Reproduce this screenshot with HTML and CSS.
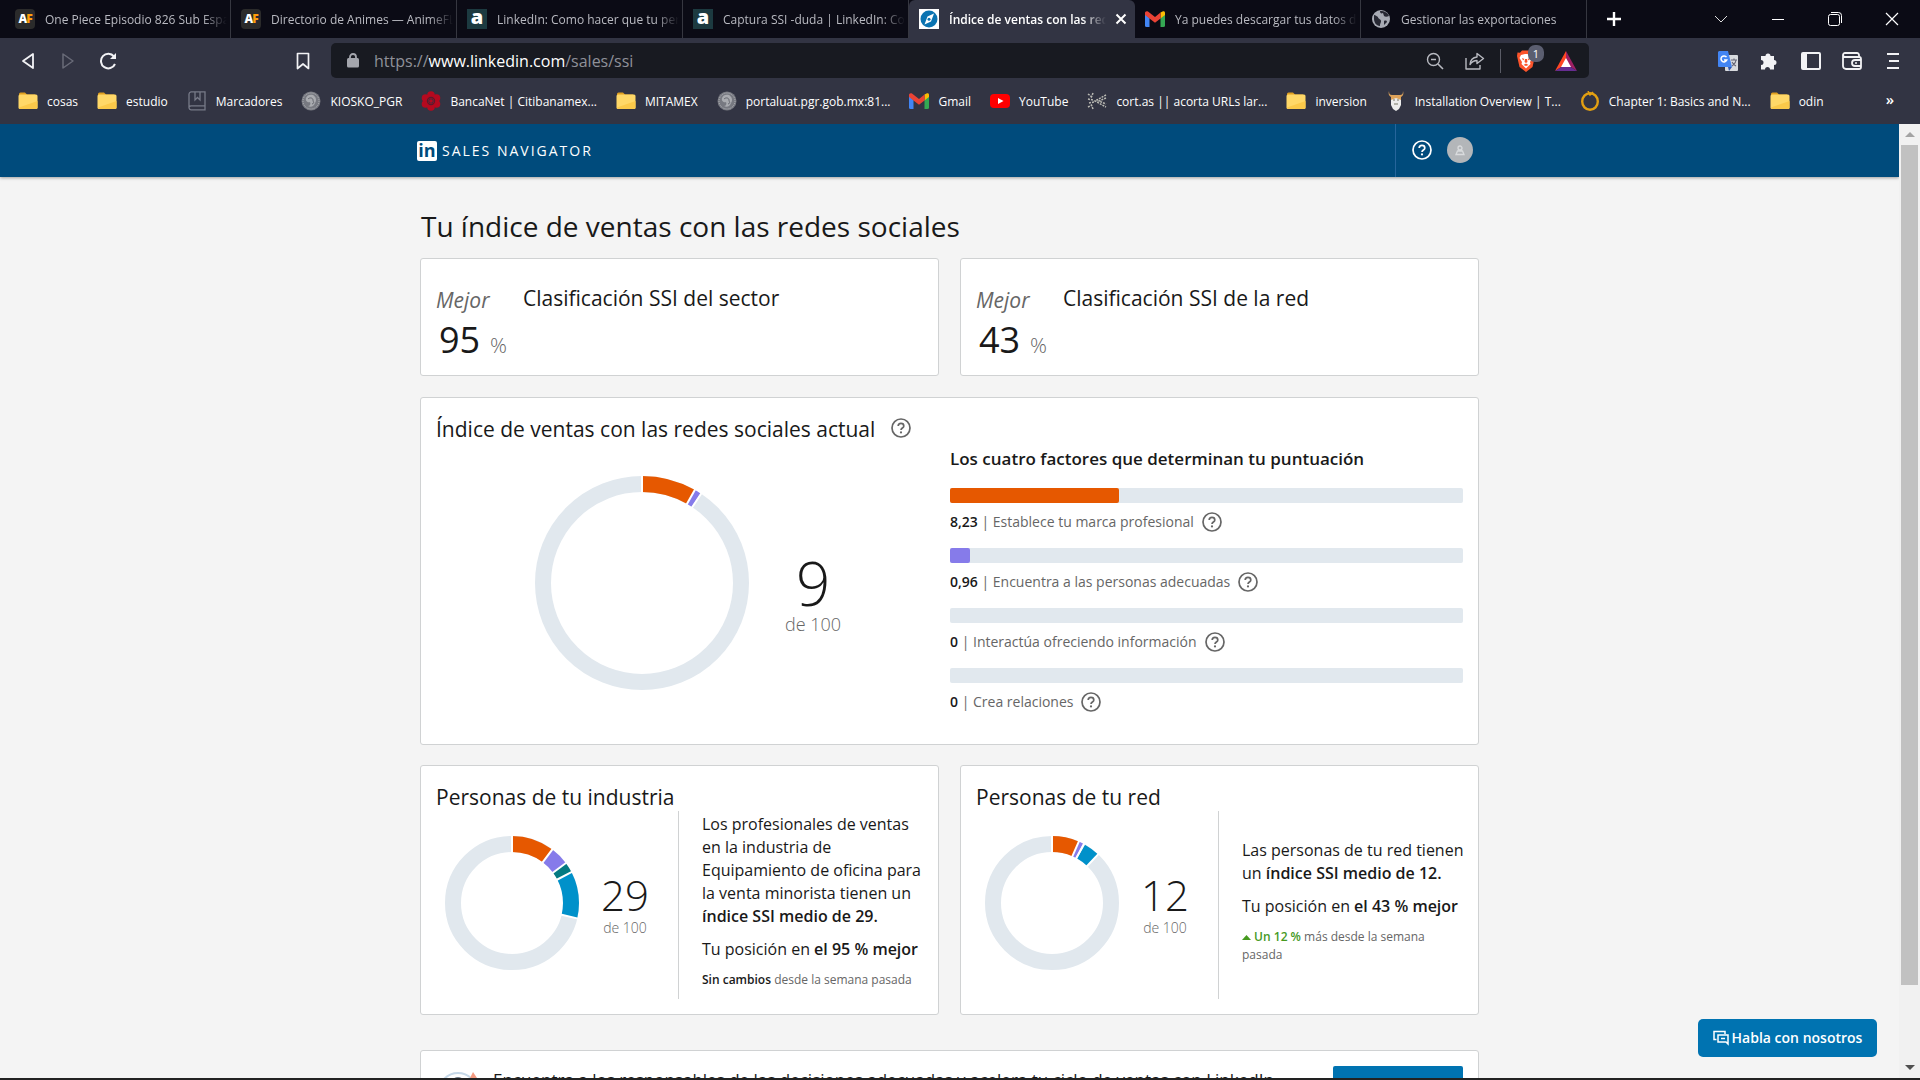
FILE: index.html
```html
<!DOCTYPE html>
<html lang="es">
<head>
<meta charset="utf-8">
<title>Índice de ventas con las redes sociales</title>
<link rel="stylesheet" href="styles.css">
</head>
<body>
<svg class="sprite" aria-hidden="true">
  <symbol id="help" viewBox="0 0 20 20"><circle cx="10" cy="10" r="9" fill="none" stroke="currentColor" stroke-width="1.7"/><path d="M7.2 8.1C7.2 6.4 8.4 5.4 10 5.4s2.8 1 2.8 2.5c0 2.1-2.8 2.1-2.8 4.2" fill="none" stroke="currentColor" stroke-width="1.7"/><circle cx="10" cy="14.4" r="1.1" fill="currentColor"/></symbol>
  <symbol id="folder" viewBox="0 0 20 18"><path d="M1 3V2a1.500 1.500 0 0 1 1.500-1.500h4.500l2 2H17v3H1z" fill="#e0a020"/><rect x="0.500" y="2.500" width="19" height="14.500" rx="1.500" fill="#ffd868"/><path d="M1 15.500L19.500 9v6.500a1.500 1.500 0 0 1-1.500 1.500H2z" fill="#fbc94a"/></symbol>
  <symbol id="gmail" viewBox="0 0 20 16"><path d="M0 3v11.500A1.500 1.500 0 0 0 1.500 16h3V7z" fill="#4285f4"/><path d="M20 3v11.500a1.500 1.500 0 0 1-1.500 1.500h-3V7z" fill="#34a853"/><path d="M15.500 1.500L18 .3c1-.5 2 .3 2 1.500V4l-4.500 3.500z" fill="#fbbc04"/><path d="M0 4V2C0 .3 1.700-.4 3 .6l7 5.300L15.500 1.500v6L10 11.700 4.500 7.500z" fill="#ea4335"/></symbol>
  <symbol id="seal" viewBox="0 0 20 20"><circle cx="10" cy="10" r="9.500" fill="#777981"/><circle cx="10" cy="10" r="8" fill="none" stroke="#b5b6bb" stroke-dasharray="1 1"/><path d="M5 7c1-3 4-4 7-3 3 2 4 5 2 8-1 3-4 5-7 3 2 0 3-2 2-4-2 1-5-1-4-4z" fill="#a9abb0"/><path d="M7 8c2-2 5-1 5 1s2 3-1 4" stroke="#62646c" fill="none"/></symbol>
</svg>

<header class="browser">
  <nav class="tabs" aria-label="Pestañas">
    <a class="tab" href="#"><span class="fav fav-af">A<b>F</b></span><span class="tab-name">One Piece Episodio 826 Sub Español</span></a>
    <a class="tab" href="#"><span class="fav fav-af">A<b>F</b></span><span class="tab-name">Directorio de Animes — AnimeFLV</span></a>
    <a class="tab" href="#"><span class="fav fav-a">a</span><span class="tab-name">LinkedIn: Como hacer que tu perfil</span></a>
    <a class="tab" href="#"><span class="fav fav-a">a</span><span class="tab-name">Captura SSI -duda | LinkedIn: Como</span></a>
    <div class="tab tab-active"><svg class="fav" viewBox="0 0 20 20"><path d="M0 0h20v20H0z" fill="#fff"/><circle cx="10" cy="10" r="8.500" fill="#0a73b1"/><path d="M15 4.500l-3 8-6.500 3 3-8z" fill="#fff"/><circle cx="10" cy="10.200" r="1.500" fill="#0a73b1"/></svg><span class="tab-name">Índice de ventas con las redes</span><button class="tab-close" aria-label="Cerrar pestaña"><svg width="12" height="12" viewBox="0 0 12 12"><path d="M1.500 1.500l9 9m0-9l-9 9" stroke="#fff" stroke-width="2"/></svg></button></div>
    <a class="tab" href="#"><svg class="fav" viewBox="0 -2 20 20"><use href="#gmail" width="20" height="16"/></svg><span class="tab-name">Ya puedes descargar tus datos de</span></a>
    <a class="tab" href="#"><svg class="fav" viewBox="0 0 20 20"><circle cx="10" cy="10" r="9" fill="#a8abb4"/><path d="M3 6c2 0 2 1 4 2 0 2 3 2 3 4s-1 2-1 5c-4 0-6-4-6-7zM9 2c0 2 1 3 3 2l1 3c1 1 3 1 5 0-1-3-4-5-9-5zM13 12c2-1 3 0 3 1l-3 3z" fill="#272833"/></svg><span class="tab-name">Gestionar las exportaciones</span></a>
    <button class="new-tab" aria-label="Nueva pestaña"><svg width="16" height="16" viewBox="0 0 16 16"><path d="M8 1v14M1 8h14" stroke="#fff" stroke-width="2.400"/></svg></button>
    <div class="window-controls">
      <button aria-label="Buscar pestañas"><svg width="14" height="14" viewBox="0 0 14 14"><path d="M1 4l6 6 6-6" fill="none" stroke="#ddd"/></svg></button>
      <button aria-label="Minimizar"><svg width="14" height="14" viewBox="0 0 14 14"><path d="M1 7.500h12" stroke="#fff"/></svg></button>
      <button aria-label="Restaurar"><svg width="14" height="14" viewBox="0 0 14 14"><rect x=".5" y="2.500" width="11" height="11" rx="2" fill="none" stroke="#fff"/><path d="M3 .5h7.500a3 3 0 0 1 3 3V11" fill="none" stroke="#fff"/></svg></button>
      <button aria-label="Cerrar"><svg width="14" height="14" viewBox="0 0 14 14"><path d="M1 1l12 12M13 1L1 13" stroke="#fff" stroke-width="1.200"/></svg></button>
    </div>
  </nav>

  <div class="toolbar">
    <button class="tool" aria-label="Atrás"><svg width="16" height="18" viewBox="0 0 16 18"><path d="M13 2v14L3 9z" fill="none" stroke="#f2f2f5" stroke-width="1.800" stroke-linejoin="round"/></svg></button>
    <button class="tool" aria-label="Adelante"><svg width="16" height="18" viewBox="0 0 16 18"><path d="M3 2v14l10-7z" fill="none" stroke="#696b78" stroke-width="1.500" stroke-linejoin="round"/></svg></button>
    <button class="tool" aria-label="Recargar"><svg width="18" height="18" viewBox="0 0 18 18"><path d="M15 4.500A7.300 7.300 0 1 0 16 12" fill="none" stroke="#f2f2f5" stroke-width="2"/><path d="M17 1v6h-6z" fill="#f2f2f5"/></svg></button>
    <button class="tool tool-save" aria-label="Guardar marcador"><svg width="14" height="18" viewBox="0 0 14 18"><path d="M1.500 1.500h11v15L7 12l-5.500 4.500z" fill="none" stroke="#f2f2f5" stroke-width="1.700" stroke-linejoin="round"/></svg></button>
    <div class="address">
      <svg width="12" height="15" viewBox="0 0 12 15"><rect y="5" width="12" height="9.500" rx="1.500" fill="#a4a6ad"/><path d="M3 6V4a3 3 0 0 1 6 0v2" fill="none" stroke="#a4a6ad" stroke-width="1.800"/></svg>
      <a class="url" href="#">https://<b>www.linkedin.com</b>/sales/ssi</a>
      <button class="tool" aria-label="Zoom"><svg width="18" height="18" viewBox="0 0 18 18"><circle cx="7.500" cy="7.500" r="6" fill="none" stroke="#b8bac1" stroke-width="1.400"/><path d="M12 12l5 5M5 7.500h5" stroke="#b8bac1" stroke-width="1.600"/></svg></button>
      <button class="tool" aria-label="Compartir"><svg width="20" height="18" viewBox="0 0 20 18"><path d="M1 6v11h14v-4M12 1.500l6.500 5L12 11.500V8.500c-3 0-5 1-7 4 .3-4 2.500-7 7-7.500z" fill="none" stroke="#b8bac1" stroke-width="1.400" stroke-linejoin="round"/></svg></button>
      <span class="separator"></span>
      <button class="tool shield" aria-label="Brave Shields"><svg width="18" height="22" viewBox="0 0 18 22"><path d="M5 .5h8l2 2 2.500-.3L18 6l-2.500 11L9 22l-6.500-5L0 6l.5-3.500 2.500.3z" fill="#fb542b"/><path d="M4 5l4-1h2l4 1 1.500 3-2.500 4 .5 2L9 18.500 4.500 14l.5-2-2.500-4z" fill="#fff"/><path d="M5 8l2.500 1L6 10.500zm8 0l-2.500 1 1.500 1.500zM8 9h2l.5 3L9 13l-1.500-1zM6.500 15L9 13.500l2.500 1.500L9 16z" fill="#fb542b"/></svg><span class="badge">1</span></button>
      <button class="tool" aria-label="Brave Rewards"><svg width="22" height="20" viewBox="0 0 22 20"><path d="M11 0L0 20l11-7z" fill="#ff4724"/><path d="M11 0l11 20-11-7z" fill="#9e1f63"/><path d="M0 20h22l-11-7z" fill="#662d91"/><path d="M11 7l5 9H6z" fill="#fff"/></svg></button>
    </div>
    <div class="extensions">
      <button class="tool" aria-label="Traductor"><svg width="20" height="20" viewBox="0 0 20 20"><rect x="7" y="4" width="13" height="16" rx="1" fill="#d8dade"/><path d="M1 0h9l4 16H1a1 1 0 0 1-1-1V1z" fill="#4285f4"/><path d="M10 16h4l-3 4z" fill="#3058b0"/><path d="M8.500 6.200A3 3 0 1 0 8.800 9H6" fill="none" stroke="#fff" stroke-width="1.500"/><path d="M13 9h6M16 7.500V9m2 0c0 3-2 4-4 6m0-4c1 2 2 3 4 4" fill="none" stroke="#667" stroke-width="1.100"/></svg></button>
      <button class="tool" aria-label="Extensiones"><svg width="18" height="18" viewBox="0 0 18 18"><path d="M1 4h4.500a2.500 2.500 0 1 1 5 0H14v4a2.500 2.500 0 1 1 0 5v4.500h-4a2.500 2.500 0 0 0-5 0H1V13a2.500 2.500 0 0 0 0-5z" fill="#f2f2f5"/></svg></button>
      <button class="tool" aria-label="Panel lateral"><svg width="20" height="18" viewBox="0 0 20 18"><rect x="1" y="1" width="18" height="16" rx="1" fill="none" stroke="#f2f2f5" stroke-width="2"/><path d="M1 1h5v16H1z" fill="#f2f2f5"/></svg></button>
      <button class="tool" aria-label="Cartera"><svg width="20" height="18" viewBox="0 0 20 18"><path d="M17 5V3a2 2 0 0 0-2-2H3a2 2 0 0 0 0 4h14a2 2 0 0 1 2 2v8a2 2 0 0 1-2 2H4a3 3 0 0 1-3-3V3" fill="none" stroke="#f2f2f5" stroke-width="1.800"/><path d="M19 8h-6a3 3 0 0 0 0 6h6" fill="none" stroke="#f2f2f5" stroke-width="1.800"/><circle cx="14" cy="11" r="1" fill="#f2f2f5"/></svg></button>
      <button class="tool" aria-label="Menú"><svg width="12" height="18" viewBox="0 0 12 18"><path d="M0 2h12M2 9h10M0 16h12" stroke="#f2f2f5" stroke-width="1.800"/></svg></button>
    </div>
  </div>

  <nav class="bookmarks" aria-label="Marcadores">
    <a href="#"><svg viewBox="0 0 20 18"><use href="#folder"/></svg>cosas</a>
    <a href="#"><svg viewBox="0 0 20 18"><use href="#folder"/></svg>estudio</a>
    <a href="#"><svg viewBox="0 0 20 20"><path d="M4 .8h14v18H4a2.500 2.500 0 0 1-2-2V3a2.500 2.500 0 0 1 2-2.200zM2 17a2 2 0 0 1 2-2.200h14M8 1v8l2.500-2.500L13 9V1" fill="none" stroke="#777a88" stroke-width="1.300"/></svg>Marcadores</a>
    <a href="#"><svg viewBox="0 0 20 20"><use href="#seal"/></svg>KIOSKO_PGR</a>
    <a href="#"><svg viewBox="0 0 20 20"><g fill="#b5091f"><circle cx="10" cy="4" r="3.800"/><circle cx="15.500" cy="7" r="3.800"/><circle cx="15.500" cy="13" r="3.800"/><circle cx="10" cy="16" r="3.800"/><circle cx="4.500" cy="13" r="3.800"/><circle cx="4.500" cy="7" r="3.800"/></g><circle cx="10" cy="10" r="3.600" fill="none" stroke="#5a1a2c" stroke-width="1.200"/><circle cx="10" cy="10" r="1.800" fill="#b5091f"/></svg>BancaNet | Citibanamex...</a>
    <a href="#"><svg viewBox="0 0 20 18"><use href="#folder"/></svg>MITAMEX</a>
    <a href="#"><svg viewBox="0 0 20 20"><use href="#seal"/></svg>portaluat.pgr.gob.mx:81...</a>
    <a href="#"><svg viewBox="0 -2 20 20"><use href="#gmail" width="20" height="16"/></svg>Gmail</a>
    <a href="#"><svg viewBox="0 0 20 20"><rect y="3" width="20" height="14" rx="4" fill="#f00"/><path d="M8 7l5.500 3L8 13z" fill="#fff"/></svg>YouTube</a>
    <a href="#"><svg viewBox="0 0 20 20"><path d="M19 4L8 10l11 6M19 7l-7 3 7 3M1 3l4 3M6 2l-2 5M1 8l5 1M1 16l4-2M6 18l-2-5M2 12l5-1" fill="none" stroke="#b9b9b3" stroke-width="1.500" stroke-dasharray="2 1"/></svg>cort.as || acorta URLs lar...</a>
    <a href="#"><svg viewBox="0 0 20 18"><use href="#folder"/></svg>inversion</a>
    <a href="#"><svg viewBox="0 0 20 20"><path d="M3 0c0 3 1 4 3 4h8c2 0 3-1 3-4 1 3 0 5-2 6v6H5V6C3 5 2 3 3 0z" fill="#dda25a"/><path d="M5 9l5-2 5 2v5l-2 4-3 2-3-2-2-4z" fill="#ececec"/><path d="M7 9h2m2 0h2M8 13h4" stroke="#776"/></svg>Installation Overview | T...</a>
    <a href="#"><svg viewBox="0 0 20 20"><ellipse cx="10" cy="10.500" rx="7.800" ry="8.300" fill="none" stroke="#e3a012" stroke-width="2.400"/><path d="M8 0l2 4 3-3" fill="none" stroke="#e3a012" stroke-width="1.500"/></svg>Chapter 1: Basics and N...</a>
    <a href="#"><svg viewBox="0 0 20 18"><use href="#folder"/></svg>odin</a>
    <button class="more" aria-label="Más marcadores">»</button>
  </nav>
</header>

<div class="viewport">
  <div class="page">
    <header class="site-nav">
      <div class="site-nav-inner">
        <a class="brand" href="#"><span class="brand-mark">in</span><span class="brand-name">SALES NAVIGATOR</span></a>
        <div class="nav-actions">
          <button aria-label="Ayuda"><svg width="20" height="20"><use href="#help"/></svg></button>
          <button class="avatar" aria-label="Perfil"><svg width="12" height="12" viewBox="0 0 12 12"><path d="M2 10.500h8L8.500 7h-5zM6 6a2 2 0 1 0 0-4 2 2 0 0 0 0 4z" fill="none" stroke="#d9dbdd" stroke-width="1.300"/></svg></button>
        </div>
      </div>
    </header>

    <main class="content">
      <h1>Tu índice de ventas con las redes sociales</h1>

      <div class="pair">
        <section class="card rank">
          <div class="rank-score"><i>Mejor</i><p><span class="rank-number">95</span><span class="rank-unit">%</span></p></div>
          <h2>Clasificación SSI del sector</h2>
        </section>
        <section class="card rank">
          <div class="rank-score"><i>Mejor</i><p><span class="rank-number">43</span><span class="rank-unit">%</span></p></div>
          <h2>Clasificación SSI de la red</h2>
        </section>
      </div>

      <section class="card current">
        <div class="current-head"><h2>Índice de ventas con las redes sociales actual</h2><button class="help" aria-label="Ayuda"><svg width="20" height="20"><use href="#help"/></svg></button></div>
        <div class="current-score">
          <svg class="donut" width="214" height="214" viewBox="-107 -107 214 214">
            <g class="ring" transform="rotate(-90)"><circle class="track" r="99"/><circle class="brand-seg" r="99" pathLength="1000" stroke-dasharray="82 918"/><circle class="people-seg" r="99" pathLength="1000" stroke-dasharray="10 990" stroke-dashoffset="-82"/></g>
            <g class="cuts"><path d="M0-90V-108"/><path d="M0-90V-108" transform="rotate(29.600)"/><path d="M0-90V-108" transform="rotate(33.500)"/></g>
          </svg>
          <div class="score score-large"><strong>9</strong><span>de 100</span></div>
        </div>
        <div class="factors">
          <h3>Los cuatro factores que determinan tu puntuación</h3>
          <div class="factor"><div class="bar"><div class="fill brand-fill" style="width:32.920%"></div></div><p><b>8,23</b> | Establece tu marca profesional</p><button class="help" aria-label="Ayuda"><svg width="20" height="20"><use href="#help"/></svg></button></div>
          <div class="factor"><div class="bar"><div class="fill people-fill" style="width:3.840%"></div></div><p><b>0,96</b> | Encuentra a las personas adecuadas</p><button class="help" aria-label="Ayuda"><svg width="20" height="20"><use href="#help"/></svg></button></div>
          <div class="factor"><div class="bar"></div><p><b>0</b> | Interactúa ofreciendo información</p><button class="help" aria-label="Ayuda"><svg width="20" height="20"><use href="#help"/></svg></button></div>
          <div class="factor"><div class="bar"></div><p><b>0</b> | Crea relaciones</p><button class="help" aria-label="Ayuda"><svg width="20" height="20"><use href="#help"/></svg></button></div>
        </div>
      </section>

      <div class="pair">
        <section class="card group">
          <h2>Personas de tu industria</h2>
          <div class="group-body">
            <div class="group-score">
              <svg class="donut" width="134" height="134" viewBox="-67 -67 134 134">
                <g class="ring" transform="rotate(-90)"><circle class="track" r="59"/><circle class="brand-seg" r="59" pathLength="1000" stroke-dasharray="102 898"/><circle class="people-seg" r="59" pathLength="1000" stroke-dasharray="46 954" stroke-dashoffset="-102"/><circle class="insight-seg" r="59" pathLength="1000" stroke-dasharray="26 974" stroke-dashoffset="-148"/><circle class="relation-seg" r="59" pathLength="1000" stroke-dasharray="113 887" stroke-dashoffset="-174"/></g>
                <g class="cuts"><path d="M0-50V-68"/><path d="M0-50V-68" transform="rotate(37)"/><path d="M0-50V-68" transform="rotate(53.500)"/><path d="M0-50V-68" transform="rotate(62.600)"/><path d="M0-50V-68" transform="rotate(103.300)"/></g>
              </svg>
              <div class="score"><strong>29</strong><span>de 100</span></div>
            </div>
            <div class="group-text">
              <p>Los profesionales de ventas en la industria de Equipamiento de oficina para la venta minorista tienen un <b>índice SSI medio de 29.</b></p>
              <p>Tu posición en <b>el 95 % mejor</b></p>
              <p class="trend"><b>Sin cambios</b> desde la semana pasada</p>
            </div>
          </div>
        </section>
        <section class="card group">
          <h2>Personas de tu red</h2>
          <div class="group-body">
            <div class="group-score">
              <svg class="donut" width="134" height="134" viewBox="-67 -67 134 134">
                <g class="ring" transform="rotate(-90)"><circle class="track" r="59"/><circle class="brand-seg" r="59" pathLength="1000" stroke-dasharray="65 935"/><circle class="people-seg" r="59" pathLength="1000" stroke-dasharray="12 988" stroke-dashoffset="-65"/><circle class="relation-seg" r="59" pathLength="1000" stroke-dasharray="38 962" stroke-dashoffset="-82"/></g>
                <g class="cuts"><path d="M0-50V-68"/><path d="M0-50V-68" transform="rotate(23.600)"/><path d="M0-50V-68" transform="rotate(28.400)"/><path d="M0-50V-68" transform="rotate(43.500)"/></g>
              </svg>
              <div class="score"><strong>12</strong><span>de 100</span></div>
            </div>
            <div class="group-text">
              <p>Las personas de tu red tienen un <b>índice SSI medio de 12.</b></p>
              <p>Tu posición en <b>el 43 % mejor</b></p>
              <p class="trend"><span class="up"><svg width="9" height="5" viewBox="0 0 9 5"><path d="M0 5h9L4.500 0z" fill="#469a1f"/></svg> Un 12 %</span> más desde la semana pasada</p>
            </div>
          </div>
        </section>
      </div>

      <section class="card promo">
        <svg width="42" height="42" viewBox="0 0 42 42"><circle cx="19" cy="20" r="19" fill="none" stroke="#c6d8e8" stroke-width="2"/><circle cx="19" cy="12" r="7" fill="#6d7a89"/><path d="M30 8l4-8 6 9z" fill="#f49a80"/></svg>
        <p>Encuentra a los responsables de las decisiones adecuadas y acelera tu ciclo de ventas con LinkedIn</p>
        <button class="promo-button" aria-label="Más información"></button>
      </section>
    </main>
    <button class="chat"><svg width="16" height="16" viewBox="0 0 16 16"><path d="M3.500 9.500H1V1.500h11v2.500M5 5h10v9l-2-2H5zM8 8.500h4" fill="none" stroke="#fff" stroke-width="1.500"/></svg>Habla con nosotros</button>
  </div>
  <div class="scrollbar" aria-hidden="true"><i class="arrow-up"></i><div class="thumb"></div><i class="arrow-down"></i></div>
</div>
</body>
</html>
```
FILE: styles.css
```css
* { box-sizing: border-box; }

body {
  margin: 0;
  height: 100vh;
  display: flex;
  flex-direction: column;
  overflow: hidden;
  font-family: "Open Sans", "Noto Sans", sans-serif;
  color: #191919;
  background: #222;
}

h1, h2, h3, p { margin: 0; font-weight: 400; }
a { color: inherit; text-decoration: none; }
button { font: inherit; color: inherit; background: none; border: 0; padding: 0; display: flex; align-items: center; justify-content: center; }
svg { display: block; flex: none; }
b { font-weight: 600; }
.sprite { position: absolute; width: 0; height: 0; }

/* Browser frame */
.browser { flex: none; background: #323443; font-size: 12px; color: #fff; }

.tabs { display: flex; height: 38px; padding-left: 5px; background: #0b0b15; }
.tab { flex: 0 1 226px; min-width: 0; display: flex; align-items: center; gap: 10px; padding: 0 4px 0 10px; color: #b9bac1; box-shadow: inset -1px 0 #363740; }
.tab-active { padding-right: 0; background: #323443; border-radius: 6px 6px 0 0; color: #fff; font-weight: 600; box-shadow: none; }
.tab-name { flex: 1; min-width: 0; overflow: hidden; white-space: nowrap; mask-image: linear-gradient(to right, #000 calc(100% - 24px), transparent); }
.tab-active .tab-name { flex-basis: 160px; }
.tab-close { width: 28px; height: 28px; margin-left: -8px; }
.fav { width: 20px; height: 20px; flex: none; text-align: center; }
.fav-af { background: #2b2b2b; border-radius: 4px; color: #fff; font-size: 12px; font-weight: 800; line-height: 20px; letter-spacing: -1px; }
.fav-af b { color: #ff9d0a; font-weight: 800; }
.fav-a { background: #1c3a40; color: #fff; font-size: 20px; font-weight: 800; line-height: 16px; }
.new-tab { width: 54px; }
.window-controls { display: flex; margin-left: auto; }
.window-controls button { width: 57px; }

.toolbar { display: flex; align-items: center; height: 45px; padding: 0 7px 0 8px; }
.tool { width: 40px; height: 30px; flex: none; }
.tool-save { margin-left: auto; margin-right: 8px; }
.address { flex: 0 1 1258px; display: flex; align-items: center; height: 35px; padding: 0 3px 0 16px; border-radius: 5px; background: #181a21; }
.url { flex: 1; margin-left: 15px; font-size: 16px; color: #8f9199; }
.url b { color: #fff; font-weight: 400; }
.separator { width: 1px; height: 24px; margin: 0 5px; background: #5a5c66; }
.shield { position: relative; }
.badge { position: absolute; left: 22px; top: -1px; width: 16px; height: 17px; border-radius: 7px; background: #5b5e70; font-size: 11px; line-height: 17px; text-align: center; }
.extensions { display: flex; justify-content: space-between; width: 205px; margin-left: 119px; }

.bookmarks { display: flex; align-items: center; height: 41px; padding: 0 16px 5px 18px; gap: 19px; white-space: nowrap; }
.bookmarks a { display: flex; align-items: center; gap: 9px; }
.bookmarks svg { width: 20px; height: 20px; }
.bookmarks .more { width: 28px; height: 24px; margin-left: auto; padding-bottom: 4px; font-size: 15px; font-weight: 600; }

/* Page area */
.viewport { flex: 1; min-height: 0; display: flex; margin-bottom: 2px; overflow: hidden; }
.page { flex: 1; min-width: 0; position: relative; overflow: hidden; background: #f4f4f4; }

.scrollbar { width: 21px; flex: none; display: flex; flex-direction: column; align-items: center; background: #f1f1f1; }
.scrollbar i { height: 21px; display: flex; align-items: center; }
.scrollbar i::before { content: ""; border: 5px solid transparent; }
.scrollbar .arrow-up::before { border-top-width: 0; border-bottom-color: #a3a3a3; }
.scrollbar .arrow-down { margin-top: auto; }
.scrollbar .arrow-down::before { border-bottom-width: 0; border-top-color: #505050; }
.thumb { width: 17px; height: 88%; background: #c1c1c1; }

.site-nav { height: 53px; background: #004b7c; box-shadow: 0 1px 3px rgba(0, 0, 0, .35); color: #fff; }
.site-nav-inner { max-width: 1065px; height: 100%; margin: 0 auto; display: flex; justify-content: space-between; }
.brand { display: flex; align-items: center; gap: 5px; }
.brand-mark { width: 20px; height: 20px; border-radius: 2px; background: #fff; color: #004b7c; font-size: 18px; font-weight: 700; line-height: 19px; text-align: center; }
.brand-name { font-size: 14px; letter-spacing: 2px; }
.nav-actions { display: flex; align-items: center; gap: 15px; padding: 0 9px 2px 16px; border-left: 1px solid #26659b; }
.avatar { width: 26px; height: 26px; border-radius: 50%; background: #b3b6b9; }

.content { max-width: 1059px; margin: 0 auto; padding-top: 30px; }
h1 { margin-bottom: 13px; padding-left: 1px; font-size: 28px; line-height: 38px; }
h2 { font-size: 21px; line-height: 28px; }
.pair { display: grid; grid-template-columns: 1fr 1fr; gap: 21px; }
.card { background: #fff; border: 1px solid #d0d2d3; border-radius: 3px; }
.help { color: #666; }

.rank { display: flex; min-height: 118px; padding: 25px 15px 0; }
.rank-score { width: 87px; color: #666; font-size: 21px; line-height: 32px; }
.rank-score p { display: flex; align-items: baseline; justify-content: space-between; width: 71px; padding-left: 3px; line-height: 48px; }
.rank-number { color: #191919; font-size: 36px; }
.rank-unit { font-weight: 300; }

.current { display: grid; grid-template-columns: 1fr 513px; align-items: start; min-height: 347px; margin: 21px 0 20px; padding: 16px 15px; }
.current-head { grid-column: 1 / -1; display: flex; align-items: center; gap: 16px; height: 30px; }
.current-head .help { padding-bottom: 2px; }
.current-score { display: flex; align-items: flex-start; gap: 36px; padding: 32px 0 0 99px; }
.score { display: flex; flex-direction: column; align-items: center; color: #666; font-size: 14px; line-height: 20px; font-weight: 300; }
.score strong { color: #191919; font-size: 42px; line-height: 46px; font-weight: 300; }
.score-large { padding-top: 77px; font-size: 18px; line-height: 22px; }
.score-large strong { font-size: 60px; line-height: 60px; }

.ring circle { fill: none; stroke-width: 16; }
.ring .track { stroke: #e1e8ee; }
.ring .brand-seg { stroke: #e65800; }
.ring .people-seg { stroke: #867bea; }
.ring .insight-seg { stroke: #047a82; }
.ring .relation-seg { stroke: #0091ca; }
.cuts { stroke: #fff; stroke-width: 2; }

.factors h3 { font-size: 17px; line-height: 30px; font-weight: 600; margin-bottom: 14px; }
.factor { display: flex; flex-wrap: wrap; align-items: center; gap: 0 8px; height: 60px; align-content: flex-start; }
.factor p { font-size: 14px; line-height: 38px; color: #666; }
.factor b { color: #191919; }
.bar { width: 100%; height: 15px; border-radius: 2px; background: #e1e8ee; }
.fill { height: 100%; border-radius: 2px; }
.brand-fill { background: #e65800; }
.people-fill { background: #867bea; }

.group { min-height: 250px; padding: 17px 9px 15px 15px; }
.group-body { display: grid; grid-template-columns: 243px 1fr; height: 188px; }
.group-score { display: flex; align-items: flex-start; gap: 22px; padding: 25px 0 0 9px; border-right: 1px solid #d0d2d3; }
.group-score .score { padding-top: 36px; }
.group-text { align-self: center; padding: 0 0 8px 23px; font-size: 16px; line-height: 23px; }
.group-text p + p { margin-top: 10px; }
.group-text .trend { padding-right: 8px; font-size: 12px; line-height: 18px; color: #666; }
.trend b { color: #191919; }
.up { color: #469a1f; font-weight: 600; }
.up svg { display: inline-block; vertical-align: middle; }

.promo { display: flex; align-items: flex-start; margin-top: 35px; padding: 15px; min-height: 90px; }
.promo svg { margin: 6px 12px 0 3px; }
.promo p { flex: 1; font-size: 17px; line-height: 28px; }
.promo-button { width: 130px; height: 40px; border-radius: 2px; background: #0073b1; }

.chat { position: absolute; right: 22px; bottom: 21px; gap: 3px; width: 179px; height: 38px; padding-bottom: 1px; border-radius: 5px; background: #0073b1; color: #fff; font-size: 14px; font-weight: 600; }
```
